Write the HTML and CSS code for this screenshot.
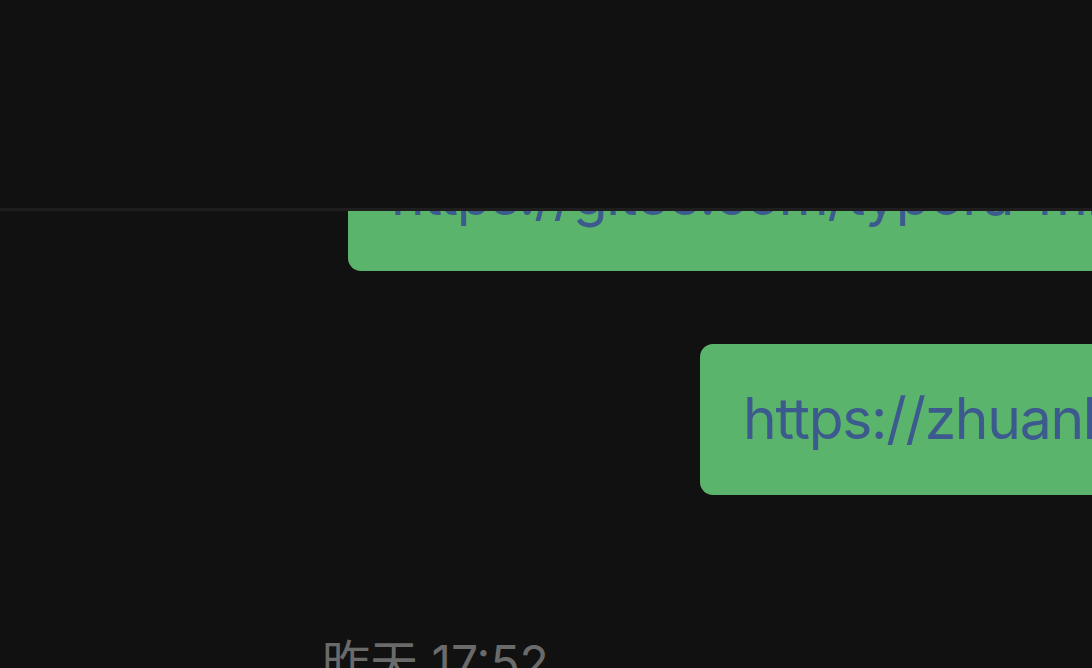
FILE: index.html
```html
<!DOCTYPE html>
<html lang="zh">
<head>
<meta charset="utf-8">
<title>Chat</title>
<link rel="stylesheet" href="styles.css">
</head>
<body>
<div class="app">
  <header class="topbar"></header>
  <main class="chat">
    <div class="messages">
      <div class="row row-first">
        <div class="bubble">https://gitee.com/typora-mirror/typora-theme</div>
      </div>
      <div class="row row-second">
        <div class="bubble">https://zhuanlan.zhihu.com/p/</div>
      </div>
      <div class="time">昨天 17:52</div>
    </div>
  </main>
</div>
</body>
</html>
```

FILE: styles.css
```css
html, body {
  margin: 0;
  padding: 0;
  background: #111111;
  overflow: hidden;
}

.app {
  width: 1092px;
  height: 668px;
  display: flex;
  flex-direction: column;
  overflow: hidden;
  background: #111111;
}

.topbar {
  flex: 0 0 208px;
  background: #111111;
  border-bottom: 3px solid #1e1e1e;
  position: relative;
  z-index: 2;
}

.chat {
  flex: 1;
  overflow: hidden;
}

.messages {
  margin-top: -91px;
  display: flex;
  flex-direction: column;
}

.row {
  display: flex;
  white-space: nowrap;
}

.row-first {
  padding-left: 348px;
}

.row-second {
  padding-left: 700px;
  margin-top: 73px;
}

.bubble {
  background: #5ab46b;
  color: #3c5a8e;
  font-family: Inter, "Liberation Sans", sans-serif;
  font-size: 57px;
  letter-spacing: -1.3px;
  line-height: 68px;
  padding: 41px 60px 42px 43px;
  border-radius: 13px;
  white-space: nowrap;
}

.time {
  margin-top: 140px;
  padding-left: 322px;
  color: #6a6a6a;
  font-family: Inter, "Noto Sans CJK SC", sans-serif;
  font-size: 48px;
  line-height: 56px;
  white-space: nowrap;
}
```
